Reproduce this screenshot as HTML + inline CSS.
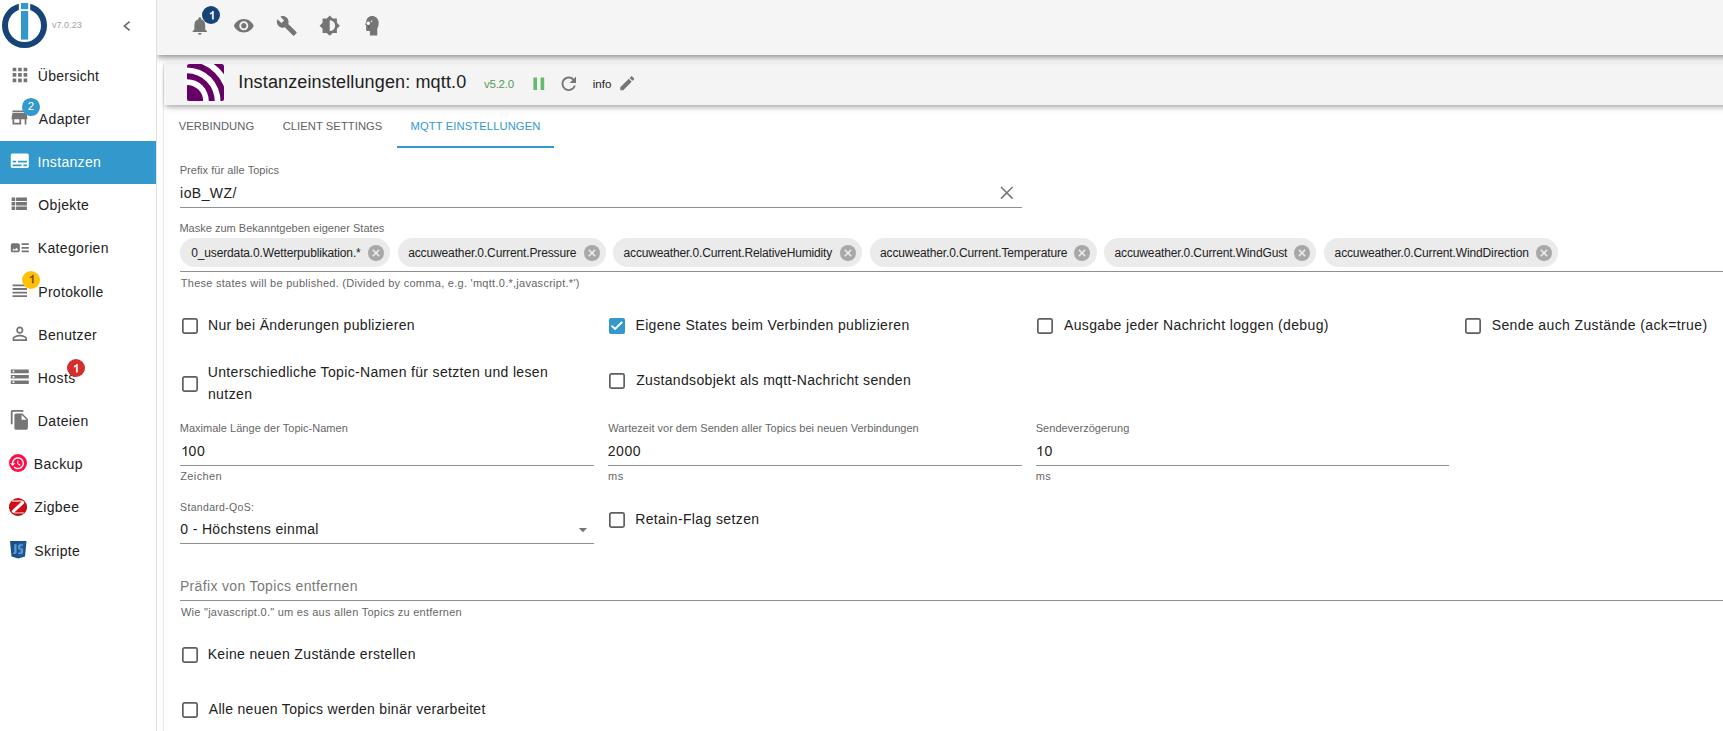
<!DOCTYPE html>
<html><head><meta charset="utf-8"><style>
html,body{margin:0;padding:0;}
body{width:1723px;height:731px;overflow:hidden;position:relative;background:#fff;font-family:"Liberation Sans", sans-serif;}
.a{position:absolute;}
.t{position:absolute;white-space:nowrap;font-family:"Liberation Sans", sans-serif;}
.badge{border-radius:50%;text-align:center;font-family:"Liberation Sans", sans-serif;}
</style></head><body>
<div class="a" style="left:164px;top:63px;width:1600px;height:700px;background:#fff;box-shadow:-1px 0 0 rgba(0,0,0,0.09);"></div>
<div class="a" style="left:164px;top:62px;width:1600px;height:43px;background:#f4f4f4;box-shadow:0 3px 4px -1px rgba(0,0,0,0.22),0 5px 8px -3px rgba(0,0,0,0.16);border-radius:4px 0 0 0;"></div>
<div class="a" style="left:157px;top:0px;width:1600px;height:55px;background:#f5f5f5;box-shadow:0 2px 4px -1px rgba(0,0,0,0.2),0 4px 5px 0 rgba(0,0,0,0.14),0 1px 10px 0 rgba(0,0,0,0.12),0 6px 8px -2px rgba(0,0,0,0.08);"></div>
<div class="a" style="left:0px;top:0px;width:156px;height:731px;background:#fff;border-right:1px solid #e0e0e0;"></div>
<svg class="a" style="left:2px;top:3px;" width="45" height="45" viewBox="0 0 45 45"><circle cx="22.5" cy="22.5" r="19.5" fill="none" stroke="#164477" stroke-width="6"/><rect x="16.8" y="-1" width="11.4" height="12" fill="#fff"/><rect x="19" y="0" width="7.2" height="6.2" fill="#3399cc"/><rect x="19" y="8" width="7.2" height="28.6" fill="#3399cc"/></svg>
<div class="t" style="left:51.96px;top:21.38px;font-size:9px;line-height:9px;color:#a3a3a3;letter-spacing:0.052px;">v7.0.23</div>
<svg class="a" style="left:120px;top:19px;" width="14" height="14" viewBox="0 0 14 14"><path d="M9.6 2.6 L4.4 7 L9.6 11.4" fill="none" stroke="#666" stroke-width="1.6"/></svg>
<div class="a" style="left:0px;top:141px;width:156px;height:43px;background:#3399cc;"></div>
<div class="t" style="left:37.84px;top:69.15px;font-size:14px;line-height:14px;color:#212121;letter-spacing:0.255px;">Übersicht</div>
<div class="t" style="left:38.87px;top:112.15px;font-size:14px;line-height:14px;color:#212121;letter-spacing:0.366px;">Adapter</div>
<div class="t" style="left:37.51px;top:155.15px;font-size:14px;line-height:14px;color:#fff;letter-spacing:0.329px;">Instanzen</div>
<div class="t" style="left:38.23px;top:198.15px;font-size:14px;line-height:14px;color:#212121;letter-spacing:0.374px;">Objekte</div>
<div class="t" style="left:37.85px;top:241.15px;font-size:14px;line-height:14px;color:#212121;letter-spacing:0.328px;">Kategorien</div>
<div class="t" style="left:38.25px;top:285.15px;font-size:14px;line-height:14px;color:#212121;letter-spacing:0.302px;">Protokolle</div>
<div class="t" style="left:38.25px;top:328.15px;font-size:14px;line-height:14px;color:#212121;letter-spacing:0.351px;">Benutzer</div>
<div class="t" style="left:37.85px;top:371.15px;font-size:14px;line-height:14px;color:#212121;letter-spacing:0.384px;">Hosts</div>
<div class="t" style="left:37.85px;top:413.65px;font-size:14px;line-height:14px;color:#212121;letter-spacing:0.347px;">Dateien</div>
<div class="t" style="left:33.85px;top:457.15px;font-size:14px;line-height:14px;color:#212121;letter-spacing:0.405px;">Backup</div>
<div class="t" style="left:34.25px;top:500.15px;font-size:14px;line-height:14px;color:#212121;letter-spacing:0.376px;">Zigbee</div>
<div class="t" style="left:34.36px;top:544.15px;font-size:14px;line-height:14px;color:#212121;letter-spacing:0.317px;">Skripte</div>
<svg class="a" style="left:8.75px;top:63.75px" width="21.90" height="21.90" viewBox="0 0 24 24"><path fill="#757575" d="M4 8h4V4H4v4zm6 12h4v-4h-4v4zm-6 0h4v-4H4v4zm0-6h4v-4H4v4zm6 0h4v-4h-4v4zm6-10v4h4V4h-4zm-6 4h4V4h-4v4zm6 6h4v-4h-4v4zm0 6h4v-4h-4v4z"/></svg>
<svg class="a" style="left:9.40px;top:107.10px" width="20.88" height="20.88" viewBox="0 0 24 24"><path fill="#757575" d="M20 4H4v2h16V4zm1 10v-2l-1-5H4l-1 5v2h1v6h10v-6h4v6h2v-6h1zm-9 4H6v-4h6v4z"/></svg>
<svg class="a" style="left:9.00px;top:150.40px" width="21.60" height="21.60" viewBox="0 0 24 24"><path fill="#fff" d="M20 4H4c-1.1 0-2 .9-2 2v12c0 1.1.9 2 2 2h16c1.1 0 2-.9 2-2V6c0-1.1-.9-2-2-2zM4 12h4v2H4v-2zm10 6H4v-2h10v2zm6 0h-4v-2h4v2zm0-4H10v-2h10v2z"/></svg>
<svg class="a" style="left:8.10px;top:193.00px" width="21.60" height="21.60" viewBox="0 0 24 24"><path fill="#757575" d="M4 14h4v-4H4v4zm0 5h4v-4H4v4zM4 9h4V5H4v4zm5 5h12v-4H9v4zm0 5h12v-4H9v4zM9 5v4h12V5H9z"/></svg>
<svg class="a" style="left:9.40px;top:237.00px" width="21.60" height="21.60" viewBox="0 0 24 24"><path fill="#757575" d="M22 13h-8v-2h8v2zm0-6h-8v2h8V7zm-8 10h8v-2h-8v2zm-2-8v6c0 1.1-.9 2-2 2H4c-1.1 0-2-.9-2-2V9c0-1.1.9-2 2-2h6c1.1 0 2 .9 2 2zm-1.5 6l-2.25-3-1.75 2.26-1.25-1.51L3.5 15h7z"/></svg>
<svg class="a" style="left:8.70px;top:279.80px" width="21.60" height="21.60" viewBox="0 0 24 24"><path fill="#757575" d="M4 15h16v-2H4v2zm0 4h16v-2H4v2zm0-8h16V9H4v2zm0-6v2h16V5H4z"/></svg>
<svg class="a" style="left:8.70px;top:322.80px" width="21.60" height="21.60" viewBox="0 0 24 24"><path fill="#757575" d="M12 5.9c1.16 0 2.1.94 2.1 2.1s-.94 2.1-2.1 2.1S9.9 9.16 9.9 8s.94-2.1 2.1-2.1m0 9c2.97 0 6.1 1.46 6.1 2.1v1.1H5.9V17c0-.64 3.13-2.1 6.1-2.1M12 4C9.79 4 8 5.79 8 8s1.79 4 4 4 4-1.79 4-4-1.79-4-4-4zm0 9c-2.67 0-8 1.34-8 4v3h16v-3c0-2.66-5.33-4-8-4z"/></svg>
<svg class="a" style="left:9.00px;top:365.80px" width="21.60" height="21.60" viewBox="0 0 24 24"><path fill="#757575" d="M2 20h20v-4H2v4zm2-3h2v2H4v-2zM2 4v4h20V4H2zm4 3H4V5h2v2zm-4 7h20v-4H2v4zm2-3h2v2H4v-2z"/></svg>
<svg class="a" style="left:9.00px;top:409.10px" width="21.60" height="21.60" viewBox="0 0 24 24"><path fill="#757575" d="M16 1H4c-1.1 0-2 .9-2 2v14h2V3h12V1zm-1 4l6 6v10c0 1.1-.9 2-2 2H7.99C6.89 23 6 22.1 6 21l.01-14c0-1.1.89-2 1.99-2h7zm-1 7h5.5L14 6.5V12z"/></svg>
<svg class="a" style="left:9px;top:453.8px;" width="18" height="18" viewBox="0 0 18 18"><circle cx="9" cy="9" r="9" fill="#ff0d45"/><path transform="translate(0.3,1.3) scale(0.665)" d="M13 3c-4.97 0-9 4.03-9 9H1l3.89 3.89.07.14L9 12H6c0-3.87 3.13-7 7-7s7 3.13 7 7-3.13 7-7 7c-1.93 0-3.68-.79-4.94-2.06l-1.42 1.42C8.27 19.990 10.51 21 13 21c4.970 0 9-4.03 9-9s-4.03-9-9-9zm-1 5v5l4.28 2.54.72-1.21-3.5-2.08V8H12z" fill="#fff"/></svg>
<svg class="a" style="left:9px;top:497.8px;" width="18" height="18" viewBox="0 0 18 18"><defs><radialGradient id="zg" cx="0.5" cy="0.45" r="0.6"><stop offset="0" stop-color="#e0101c"/><stop offset="0.75" stop-color="#c80b14"/><stop offset="1" stop-color="#7a0808"/></radialGradient></defs><circle cx="9" cy="9" r="9" fill="url(#zg)"/><rect x="3" y="2.2" width="10.5" height="1.6" fill="#f6b0b0"/><rect x="5" y="14.2" width="10" height="1.4" fill="#f0a0a0"/><path d="M13.7 4.6 L4.3 13.3" stroke="#fff" stroke-width="3" stroke-linecap="round"/></svg>
<svg class="a" style="left:10px;top:541px;" width="16.5" height="17.5" viewBox="0 0 16.5 17.5"><path d="M0 0 H16.5 L15 15.5 L8.25 17.5 L1.5 15.5 Z" fill="#1b4f8a"/><path d="M8.25 1.4 V16.1 L13.6 14.6 L14.9 1.4 Z" fill="#1f5b9c"/><path d="M4.2 3.2 H6.6 V11.2 Q6.6 13 4.9 13 H3.3 V11.5 H4.2 Z" fill="#5a9ad6"/><path d="M12.9 3.2 H9.6 Q8.1 3.2 8.1 4.7 V7.4 Q8.1 8.6 9.4 8.6 H10.6 V11.5 H8.1 V13 H11.4 Q12.9 13 12.9 11.5 V8.4 Q12.9 7.2 11.6 7.2 H10.4 V4.7 H12.9 Z" fill="#5a9ad6"/></svg>
<div class="a badge" style="left:22.0px;top:98.0px;width:17.8px;height:17.8px;background:#3399cc;color:#fff;font-size:11.5px;line-height:17.8px;font-weight:400">2</div>
<div class="a badge" style="left:22.0px;top:270.8px;width:18.0px;height:18.0px;background:#ffc107;color:#3a2f00;font-size:10.5px;line-height:18.0px;font-weight:400"></div>
<svg class="a" style="left:28.71px;top:272.00px;overflow:visible" width="11" height="11" viewBox="0 -1 1 1"><path transform="scale(1,-1)" d="M0.39 0 H0.30 V0.555 Q0.268 0.525 0.212 0.495 Q0.160 0.467 0.109 0.452 V0.537 Q0.190 0.570 0.248 0.620 Q0.306 0.668 0.333 0.716 H0.39 Z" fill="#7a4f00" stroke="#7a4f00" stroke-width="0.06"/></svg>
<div class="a badge" style="left:66.8px;top:358.8px;width:18.0px;height:18.0px;background:#d32f2f;color:#fff;font-size:11px;line-height:18.0px;font-weight:700"></div>
<svg class="a" style="left:73.23px;top:360.80px;overflow:visible" width="11.2" height="11.2" viewBox="0 -1 1 1"><path transform="scale(1,-1)" d="M0.39 0 H0.30 V0.555 Q0.268 0.525 0.212 0.495 Q0.160 0.467 0.109 0.452 V0.537 Q0.190 0.570 0.248 0.620 Q0.306 0.668 0.333 0.716 H0.39 Z" fill="#fff" stroke="#fff" stroke-width="0.06"/></svg>
<svg class="a" style="left:188.70px;top:15.00px" width="21.60" height="21.60" viewBox="0 0 24 24"><path fill="#757575" d="M12 22c1.1 0 2-.9 2-2h-4c0 1.1.89 2 2 2zm6-6v-5c0-3.07-1.64-5.64-4.5-6.32V4c0-.83-.67-1.5-1.5-1.5s-1.5.67-1.5 1.5v.68C7.63 5.36 6 7.92 6 11v5l-2 2v1h16v-1l-2-2z"/></svg>
<div class="a badge" style="left:202.0px;top:6.0px;width:18.0px;height:18.0px;background:#164477;color:#fff;font-size:11.5px;line-height:18.0px;font-weight:700"></div>
<svg class="a" style="left:209.13px;top:7.80px;overflow:visible" width="11.2" height="11.2" viewBox="0 -1 1 1"><path transform="scale(1,-1)" d="M0.39 0 H0.30 V0.555 Q0.268 0.525 0.212 0.495 Q0.160 0.467 0.109 0.452 V0.537 Q0.190 0.570 0.248 0.620 Q0.306 0.668 0.333 0.716 H0.39 Z" fill="#fff" stroke="#fff" stroke-width="0.06"/></svg>
<svg class="a" style="left:233.10px;top:14.75px" width="21.60" height="21.60" viewBox="0 0 24 24"><path fill="#757575" d="M12 4.5C7 4.5 2.73 7.61 1 12c1.73 4.39 6 7.5 11 7.5s9.27-3.11 11-7.5c-1.73-4.39-6-7.5-11-7.5zM12 17c-2.76 0-5-2.24-5-5s2.24-5 5-5 5 2.24 5 5-2.24 5-5 5zm0-8c-1.66 0-3 1.34-3 3s1.34 3 3 3 3-1.34 3-3-1.34-3-3-3z"/></svg>
<svg class="a" style="left:276.20px;top:14.70px" width="21.60" height="21.60" viewBox="0 0 24 24"><path fill="#757575" d="M22.7 19l-9.1-9.1c.9-2.3.4-5-1.5-6.9-2-2-5-2.4-7.4-1.3L9 6 6 9 1.6 4.7C.4 7.1.9 10.1 2.9 12.1c1.9 1.9 4.6 2.4 6.9 1.5l9.1 9.1c.4.4 1 .4 1.4 0l2.3-2.3c.5-.4.5-1.1.1-1.4z"/></svg>
<svg class="a" style="left:319.00px;top:14.90px" width="21.48" height="21.48" viewBox="0 0 24 24"><path fill="#757575" d="M20 15.31L23.31 12 20 8.69V4h-4.69L12 .69 8.69 4H4v4.69L.69 12 4 15.31V20h4.69L12 23.31 15.31 20H20v-4.69zM12 18V6c3.31 0 6 2.69 6 6s-2.69 6-6 6z"/></svg>
<svg class="a" style="left:358px;top:10px;" width="30" height="30" viewBox="0 0 30 30"><path d="M11.9 25.6 H19.3 V18.5 C20.5 16.5 20.8 14 20.6 12 C20.2 8.5 17.5 6 14 6 C10.8 6 8.6 8.4 8.3 11.2 L7.2 14.6 L8.1 15.3 V19.8 C8.1 20.6 8.7 21.1 9.5 21.1 H11.9 Z" fill="#757575"/><circle cx="10.3" cy="13.3" r="1.7" fill="#fff"/><circle cx="13.5" cy="11.2" r="0.8" fill="#fff"/><circle cx="10.8" cy="17" r="0.8" fill="#444"/></svg>
<svg class="a" style="left:186.7px;top:64.1px;" width="37" height="37" viewBox="0 0 37 37"><defs><clipPath id="lc"><rect x="0" y="0" width="37" height="37" rx="2.5"/></clipPath></defs><g clip-path="url(#lc)"><rect width="37" height="37" fill="#fff"/><circle cx="0" cy="37" r="60" fill="#660066"/><circle cx="0" cy="37" r="45.6" fill="#fff"/><circle cx="0" cy="37" r="39.7" fill="#660066"/><circle cx="0" cy="37" r="33.5" fill="#fff"/><circle cx="0" cy="37" r="27.7" fill="#660066"/><circle cx="0" cy="37" r="21.8" fill="#fff"/><circle cx="0" cy="37" r="16.1" fill="#660066"/></g></svg>
<div class="t" style="left:238.34px;top:72.76px;font-size:18px;line-height:18px;color:#212121;letter-spacing:0.137px;">Instanzeinstellungen: mqtt.0</div>
<div class="t" style="left:483.95px;top:79.27px;font-size:11.5px;line-height:11.5px;color:#529e52;letter-spacing:-0.229px;">v5.2.0</div>
<svg class="a" style="left:527.60px;top:72.80px" width="21.60" height="21.60" viewBox="0 0 24 24"><path fill="#66bb6a" d="M6 19h4V5H6v14zm8-14v14h4V5h-4z"/></svg>
<svg class="a" style="left:558.00px;top:73.00px" width="21.60" height="21.60" viewBox="0 0 24 24"><path fill="#757575" d="M17.65 6.35C16.2 4.9 14.21 4 12 4c-4.42 0-7.99 3.58-7.99 8s3.57 8 7.99 8c3.73 0 6.84-2.55 7.73-6h-2.08c-.82 2.33-3.04 4-5.65 4-3.31 0-6-2.69-6-6s2.69-6 6-6c1.66 0 3.14.69 4.22 1.78L13 11h7V4l-2.35 2.35z"/></svg>
<div class="t" style="left:592.64px;top:79.27px;font-size:11.5px;line-height:11.5px;color:#212121;letter-spacing:0.101px;">info</div>
<svg class="a" style="left:617.50px;top:74.00px" width="18.48" height="18.48" viewBox="0 0 24 24"><path fill="#757575" d="M3 17.25V21h3.75L17.81 9.94l-3.75-3.75L3 17.25zM20.71 7.04c.39-.39.39-1.02 0-1.41l-2.34-2.34c-.39-.39-1.02-.39-1.41 0l-1.83 1.83 3.75 3.75 1.83-1.83z"/></svg>
<div class="t" style="left:178.66px;top:120.52px;font-size:11.2px;line-height:11.2px;color:#616161;letter-spacing:0.099px;">VERBINDUNG</div>
<div class="t" style="left:282.64px;top:120.52px;font-size:11.2px;line-height:11.2px;color:#616161;letter-spacing:0.072px;">CLIENT SETTINGS</div>
<div class="t" style="left:410.48px;top:120.52px;font-size:11.2px;line-height:11.2px;color:#3399cc;letter-spacing:0.120px;">MQTT EINSTELLUNGEN</div>
<div class="a" style="left:397px;top:146px;width:157px;height:2px;background:#3399cc;"></div>
<div class="t" style="left:179.70px;top:164.69px;font-size:11px;line-height:11px;color:#666666;letter-spacing:0.056px;">Prefix für alle Topics</div>
<div class="t" style="left:180.08px;top:186.15px;font-size:14px;line-height:14px;color:#212121;letter-spacing:0.441px;">ioB_WZ/</div>
<svg class="a" style="left:996px;top:182px;" width="22" height="22" viewBox="0 0 22 22"><path d="M5 5 L16.6 16.6 M16.6 5 L5 16.6" stroke="#757575" stroke-width="1.5" fill="none"/></svg>
<div class="a" style="left:180px;top:207px;width:842px;height:1px;background:#8f8f8f;"></div>
<div class="t" style="left:179.40px;top:222.69px;font-size:11px;line-height:11px;color:#666666;letter-spacing:0.018px;">Maske zum Bekanntgeben eigener States</div>
<div class="a" style="left:180px;top:238px;width:210px;height:29px;background:#ebebeb;border-radius:14.5px;"></div>
<div class="t" style="left:191.24px;top:246.84px;font-size:12px;line-height:12px;color:#212121;letter-spacing:-0.141px;">0_userdata.0.Wetterpublikation.*</div>
<svg class="a" style="left:368px;top:244.7px;" width="16" height="16" viewBox="0 0 16 16"><circle cx="8" cy="8" r="8" fill="#a8a8a8"/><path d="M4.9 4.9 L11.1 11.1 M11.1 4.9 L4.9 11.1" stroke="#ebebeb" stroke-width="1.5"/></svg>
<div class="a" style="left:398px;top:238px;width:208px;height:29px;background:#ebebeb;border-radius:14.5px;"></div>
<div class="t" style="left:408.20px;top:246.84px;font-size:12px;line-height:12px;color:#212121;letter-spacing:-0.129px;">accuweather.0.Current.Pressure</div>
<svg class="a" style="left:584px;top:244.7px;" width="16" height="16" viewBox="0 0 16 16"><circle cx="8" cy="8" r="8" fill="#a8a8a8"/><path d="M4.9 4.9 L11.1 11.1 M11.1 4.9 L4.9 11.1" stroke="#ebebeb" stroke-width="1.5"/></svg>
<div class="a" style="left:613px;top:238px;width:249px;height:29px;background:#ebebeb;border-radius:14.5px;"></div>
<div class="t" style="left:623.50px;top:246.84px;font-size:12px;line-height:12px;color:#212121;letter-spacing:-0.143px;">accuweather.0.Current.RelativeHumidity</div>
<svg class="a" style="left:839.7px;top:244.7px;" width="16" height="16" viewBox="0 0 16 16"><circle cx="8" cy="8" r="8" fill="#a8a8a8"/><path d="M4.9 4.9 L11.1 11.1 M11.1 4.9 L4.9 11.1" stroke="#ebebeb" stroke-width="1.5"/></svg>
<div class="a" style="left:870px;top:238px;width:227px;height:29px;background:#ebebeb;border-radius:14.5px;"></div>
<div class="t" style="left:880.00px;top:246.84px;font-size:12px;line-height:12px;color:#212121;letter-spacing:-0.122px;">accuweather.0.Current.Temperature</div>
<svg class="a" style="left:1073.8px;top:244.7px;" width="16" height="16" viewBox="0 0 16 16"><circle cx="8" cy="8" r="8" fill="#a8a8a8"/><path d="M4.9 4.9 L11.1 11.1 M11.1 4.9 L4.9 11.1" stroke="#ebebeb" stroke-width="1.5"/></svg>
<div class="a" style="left:1104px;top:238px;width:212px;height:29px;background:#ebebeb;border-radius:14.5px;"></div>
<div class="t" style="left:1114.50px;top:246.84px;font-size:12px;line-height:12px;color:#212121;letter-spacing:-0.133px;">accuweather.0.Current.WindGust</div>
<svg class="a" style="left:1294px;top:244.7px;" width="16" height="16" viewBox="0 0 16 16"><circle cx="8" cy="8" r="8" fill="#a8a8a8"/><path d="M4.9 4.9 L11.1 11.1 M11.1 4.9 L4.9 11.1" stroke="#ebebeb" stroke-width="1.5"/></svg>
<div class="a" style="left:1324px;top:238px;width:234px;height:29px;background:#ebebeb;border-radius:14.5px;"></div>
<div class="t" style="left:1334.60px;top:246.84px;font-size:12px;line-height:12px;color:#212121;letter-spacing:-0.132px;">accuweather.0.Current.WindDirection</div>
<svg class="a" style="left:1535.7px;top:244.7px;" width="16" height="16" viewBox="0 0 16 16"><circle cx="8" cy="8" r="8" fill="#a8a8a8"/><path d="M4.9 4.9 L11.1 11.1 M11.1 4.9 L4.9 11.1" stroke="#ebebeb" stroke-width="1.5"/></svg>
<div class="a" style="left:180px;top:271px;width:1543px;height:1px;background:#8f8f8f;"></div>
<div class="t" style="left:180.76px;top:277.69px;font-size:11px;line-height:11px;color:#666666;letter-spacing:0.273px;">These states will be published. (Divided by comma, e.g. &#x27;mqtt.0.*,javascript.*&#x27;)</div>
<svg class="a" style="left:182px;top:318px;" width="16" height="16" viewBox="0 0 16 16"><rect x="0.85" y="0.85" width="14.3" height="14.3" rx="1.6" fill="none" stroke="#5f5f5f" stroke-width="1.7"/></svg>
<div class="t" style="left:207.95px;top:318.15px;font-size:14px;line-height:14px;color:#212121;letter-spacing:0.336px;">Nur bei Änderungen publizieren</div>
<svg class="a" style="left:609px;top:318px;" width="16" height="16" viewBox="0 0 16 16"><rect x="0" y="0" width="16" height="16" rx="2" fill="#3399cc"/><path d="M2.5 7.6 L6 11 L13.2 4" stroke="#fff" stroke-width="1.9" fill="none"/></svg>
<div class="t" style="left:635.45px;top:318.15px;font-size:14px;line-height:14px;color:#212121;letter-spacing:0.354px;">Eigene States beim Verbinden publizieren</div>
<svg class="a" style="left:1037px;top:318px;" width="16" height="16" viewBox="0 0 16 16"><rect x="0.85" y="0.85" width="14.3" height="14.3" rx="1.6" fill="none" stroke="#5f5f5f" stroke-width="1.7"/></svg>
<div class="t" style="left:1063.97px;top:318.15px;font-size:14px;line-height:14px;color:#212121;letter-spacing:0.354px;">Ausgabe jeder Nachricht loggen (debug)</div>
<svg class="a" style="left:1465px;top:318px;" width="16" height="16" viewBox="0 0 16 16"><rect x="0.85" y="0.85" width="14.3" height="14.3" rx="1.6" fill="none" stroke="#5f5f5f" stroke-width="1.7"/></svg>
<div class="t" style="left:1491.66px;top:318.15px;font-size:14px;line-height:14px;color:#212121;letter-spacing:0.383px;">Sende auch Zustände (ack=true)</div>
<svg class="a" style="left:182px;top:376px;" width="16" height="16" viewBox="0 0 16 16"><rect x="0.85" y="0.85" width="14.3" height="14.3" rx="1.6" fill="none" stroke="#5f5f5f" stroke-width="1.7"/></svg>
<div class="t" style="left:207.74px;top:365.15px;font-size:14px;line-height:14px;color:#212121;letter-spacing:0.337px;">Unterschiedliche Topic-Namen für setzten und lesen</div>
<div class="t" style="left:207.88px;top:387.15px;font-size:14px;line-height:14px;color:#212121;letter-spacing:0.438px;">nutzen</div>
<svg class="a" style="left:609px;top:373px;" width="16" height="16" viewBox="0 0 16 16"><rect x="0.85" y="0.85" width="14.3" height="14.3" rx="1.6" fill="none" stroke="#5f5f5f" stroke-width="1.7"/></svg>
<div class="t" style="left:636.15px;top:373.15px;font-size:14px;line-height:14px;color:#212121;letter-spacing:0.335px;">Zustandsobjekt als mqtt-Nachricht senden</div>
<div class="t" style="left:179.70px;top:422.69px;font-size:11px;line-height:11px;color:#666666;letter-spacing:0.027px;">Maximale Länge der Topic-Namen</div>
<div class="t" style="left:608.36px;top:422.69px;font-size:11px;line-height:11px;color:#666666;letter-spacing:0.005px;">Wartezeit vor dem Senden aller Topics bei neuen Verbindungen</div>
<div class="t" style="left:1035.69px;top:422.69px;font-size:11px;line-height:11px;color:#666666;letter-spacing:0.044px;">Sendeverzögerung</div>
<svg class="a" style="left:180.54px;top:442.00px;overflow:visible" width="14" height="14" viewBox="0 -1 1 1"><path transform="scale(1,-1)" d="M0.39 0 H0.30 V0.555 Q0.268 0.525 0.212 0.495 Q0.160 0.467 0.109 0.452 V0.537 Q0.190 0.570 0.248 0.620 Q0.306 0.668 0.333 0.716 H0.39 Z" fill="#212121" stroke="#212121" stroke-width="0"/></svg>
<div class="t" style="left:188.57px;top:444.15px;font-size:14px;line-height:14px;color:#212121;">0</div>
<div class="t" style="left:197.07px;top:444.15px;font-size:14px;line-height:14px;color:#212121;">0</div>
<div class="t" style="left:607.80px;top:444.15px;font-size:14px;line-height:14px;color:#212121;letter-spacing:0.532px;">2000</div>
<svg class="a" style="left:1035.74px;top:442.00px;overflow:visible" width="14" height="14" viewBox="0 -1 1 1"><path transform="scale(1,-1)" d="M0.39 0 H0.30 V0.555 Q0.268 0.525 0.212 0.495 Q0.160 0.467 0.109 0.452 V0.537 Q0.190 0.570 0.248 0.620 Q0.306 0.668 0.333 0.716 H0.39 Z" fill="#212121" stroke="#212121" stroke-width="0"/></svg>
<div class="t" style="left:1044.57px;top:444.15px;font-size:14px;line-height:14px;color:#212121;">0</div>
<div class="a" style="left:180px;top:465px;width:414px;height:1px;background:#8f8f8f;"></div>
<div class="a" style="left:608px;top:465px;width:414px;height:1px;background:#8f8f8f;"></div>
<div class="a" style="left:1036px;top:465px;width:413px;height:1px;background:#8f8f8f;"></div>
<div class="t" style="left:180.25px;top:470.69px;font-size:11px;line-height:11px;color:#666666;letter-spacing:0.370px;">Zeichen</div>
<div class="t" style="left:608.07px;top:470.69px;font-size:11px;line-height:11px;color:#666666;letter-spacing:0.448px;">ms</div>
<div class="t" style="left:1035.67px;top:470.69px;font-size:11px;line-height:11px;color:#666666;letter-spacing:0.448px;">ms</div>
<div class="t" style="left:180.12px;top:502.11px;font-size:10.5px;line-height:10.5px;color:#666666;letter-spacing:0.318px;">Standard-QoS:</div>
<div class="t" style="left:180.27px;top:522.15px;font-size:14px;line-height:14px;color:#212121;letter-spacing:0.351px;">0 - Höchstens einmal</div>
<svg class="a" style="left:578px;top:527px;" width="10" height="6" viewBox="0 0 10 6"><path d="M0.8 1 H9 L4.9 5.2 Z" fill="#757575"/></svg>
<div class="a" style="left:180px;top:543px;width:414px;height:1px;background:#8f8f8f;"></div>
<svg class="a" style="left:609px;top:512px;" width="16" height="16" viewBox="0 0 16 16"><rect x="0.85" y="0.85" width="14.3" height="14.3" rx="1.6" fill="none" stroke="#5f5f5f" stroke-width="1.7"/></svg>
<div class="t" style="left:635.15px;top:511.65px;font-size:14px;line-height:14px;color:#212121;letter-spacing:0.380px;">Retain-Flag setzen</div>
<div class="t" style="left:179.95px;top:579.15px;font-size:14px;line-height:14px;color:#7a7a7a;letter-spacing:0.343px;">Präfix von Topics entfernen</div>
<div class="a" style="left:180px;top:600px;width:1543px;height:1px;background:#8f8f8f;"></div>
<div class="t" style="left:180.96px;top:606.69px;font-size:11px;line-height:11px;color:#666666;letter-spacing:0.258px;">Wie &quot;javascript.0.&quot; um es aus allen Topics zu entfernen</div>
<svg class="a" style="left:182px;top:647px;" width="16" height="16" viewBox="0 0 16 16"><rect x="0.85" y="0.85" width="14.3" height="14.3" rx="1.6" fill="none" stroke="#5f5f5f" stroke-width="1.7"/></svg>
<div class="t" style="left:207.65px;top:647.15px;font-size:14px;line-height:14px;color:#212121;letter-spacing:0.350px;">Keine neuen Zustände erstellen</div>
<svg class="a" style="left:182px;top:702px;" width="16" height="16" viewBox="0 0 16 16"><rect x="0.85" y="0.85" width="14.3" height="14.3" rx="1.6" fill="none" stroke="#5f5f5f" stroke-width="1.7"/></svg>
<div class="t" style="left:208.77px;top:702.15px;font-size:14px;line-height:14px;color:#212121;letter-spacing:0.297px;">Alle neuen Topics werden binär verarbeitet</div>
</body></html>
